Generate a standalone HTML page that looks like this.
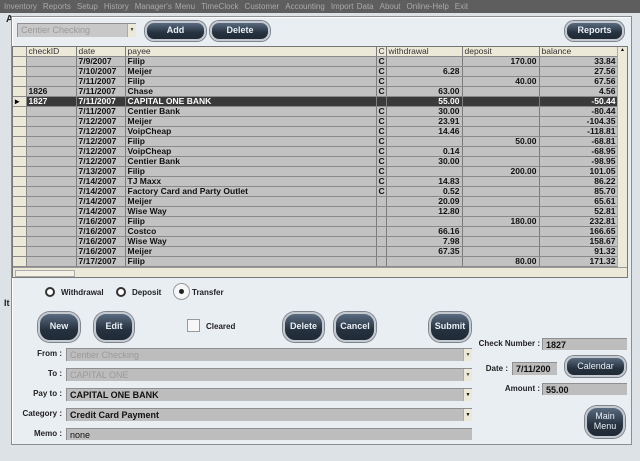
<!DOCTYPE html><html><head><style>
*{margin:0;padding:0;box-sizing:border-box}
body{width:640px;height:461px;overflow:hidden;background:#dde2e7;font-family:"Liberation Sans",sans-serif;position:relative}
.menu{position:absolute;left:0;top:0;width:640px;height:13px;background:#5e5e5e;color:#a9a9a9;font-size:8px;line-height:13px;white-space:nowrap;padding-left:4px;word-spacing:1px}
.menu span{margin-right:6px}
.win{position:absolute;left:11px;top:16px;width:621px;height:429px;background:#e9eef3;border:1px solid #8a8e92;box-shadow:1px 1px 0 #fff inset}
.a{position:absolute}
.btn{position:absolute;border-radius:9px;background:linear-gradient(#5a6b80,#26323f 60%,#1f2a36);color:#e8eef5;font-size:9px;font-weight:bold;text-align:center;border:2px solid #c4c9cf;box-shadow:0 0 0 1px #7d848c;display:flex;align-items:center;justify-content:center;line-height:1.1}
.rb{border-radius:12px}
table{border-collapse:collapse;font-size:8.5px;font-weight:bold;table-layout:fixed}
tr{height:10px}
td{height:10px;border-right:1px solid #7c7c7c;border-bottom:1px solid #8a8a8a;padding:0 2px;line-height:9px;white-space:nowrap;overflow:hidden;background:#c2c2c2;color:#111}
td.r{text-align:right}
td.s{background:#ece9d8;border-right:1px solid #888}
tr.h{height:9px}
tr.h td{background:#ece9d8;font-weight:normal;color:#333;height:9px}
tr.sel td{background:#3a3a3a;color:#fff}
.lbl{position:absolute;font-size:8px;font-weight:bold;color:#222;text-align:right}
.fld{position:absolute;background:#bdbdbd;border-top:1px solid #8f8f8f;border-left:1px solid #8f8f8f;font-size:9px;font-weight:bold;color:#111;padding-left:3px;line-height:12px}
.dd{position:absolute;right:0;top:0;width:9px;height:100%;background:#ece9d8;border-left:1px solid #aaa;font-size:5px;text-align:center;line-height:12px;color:#444}
.radio{position:absolute;width:10px;height:10px;border-radius:50%;border:2px solid #333;background:#fff}
.rl{position:absolute;font-size:8px;font-weight:bold;color:#222}
</style></head><body>
<div class="menu"><span>Inventory</span><span>Reports</span><span>Setup</span><span>History</span><span>Manager's Menu</span><span>TimeClock</span><span>Customer</span><span>Accounting</span><span>Import Data</span><span>About</span><span>Online-Help</span><span>Exit</span></div>
<div class="a" style="left:6px;top:14px;font-size:10px;font-weight:bold;color:#222">A</div>
<div class="a" style="left:4px;top:298px;font-size:9px;font-weight:bold;color:#222">It</div>
<div class="win"></div>
<div class="fld" style="left:17px;top:23px;width:119px;height:14px;background:#c8c8c8;color:#9a9a9a;font-weight:normal">Centier Checking<div class="dd" style="line-height:13px">▼</div></div>
<div class="btn" style="left:145px;top:21px;width:61px;height:20px">Add</div>
<div class="btn" style="left:210px;top:21px;width:60px;height:20px">Delete</div>
<div class="btn" style="left:565px;top:21px;width:59px;height:20px">Reports</div>
<div class="a" style="left:12px;top:46px;width:616px;height:232px;background:#ece9d8;border:1px solid #777;overflow:hidden">
<table style="width:605px">
<colgroup><col style="width:13px"><col style="width:50px"><col style="width:49px"><col style="width:251px"><col style="width:10px"><col style="width:76px"><col style="width:77px"><col style="width:79px"></colgroup>
<tr class="h"><td class="s"></td><td>checkID</td><td>date</td><td>payee</td><td>C</td><td>withdrawal</td><td>deposit</td><td>balance</td></tr>
<tr><td class="s"></td><td></td><td>7/9/2007</td><td>Filip</td><td>C</td><td></td><td class="r">170.00</td><td class="r">33.84</td></tr>
<tr><td class="s"></td><td></td><td>7/10/2007</td><td>Meijer</td><td>C</td><td class="r">6.28</td><td></td><td class="r">27.56</td></tr>
<tr><td class="s"></td><td></td><td>7/11/2007</td><td>Filip</td><td>C</td><td></td><td class="r">40.00</td><td class="r">67.56</td></tr>
<tr><td class="s"></td><td>1826</td><td>7/11/2007</td><td>Chase</td><td>C</td><td class="r">63.00</td><td></td><td class="r">4.56</td></tr>
<tr class="sel"><td class="s" style="background:#ece9d8;color:#000">▸</td><td>1827</td><td>7/11/2007</td><td>CAPITAL ONE BANK</td><td></td><td class="r">55.00</td><td></td><td class="r">-50.44</td></tr>
<tr><td class="s"></td><td></td><td>7/11/2007</td><td>Centier Bank</td><td>C</td><td class="r">30.00</td><td></td><td class="r">-80.44</td></tr>
<tr><td class="s"></td><td></td><td>7/12/2007</td><td>Meijer</td><td>C</td><td class="r">23.91</td><td></td><td class="r">-104.35</td></tr>
<tr><td class="s"></td><td></td><td>7/12/2007</td><td>VoipCheap</td><td>C</td><td class="r">14.46</td><td></td><td class="r">-118.81</td></tr>
<tr><td class="s"></td><td></td><td>7/12/2007</td><td>Filip</td><td>C</td><td></td><td class="r">50.00</td><td class="r">-68.81</td></tr>
<tr><td class="s"></td><td></td><td>7/12/2007</td><td>VoipCheap</td><td>C</td><td class="r">0.14</td><td></td><td class="r">-68.95</td></tr>
<tr><td class="s"></td><td></td><td>7/12/2007</td><td>Centier Bank</td><td>C</td><td class="r">30.00</td><td></td><td class="r">-98.95</td></tr>
<tr><td class="s"></td><td></td><td>7/13/2007</td><td>Filip</td><td>C</td><td></td><td class="r">200.00</td><td class="r">101.05</td></tr>
<tr><td class="s"></td><td></td><td>7/14/2007</td><td>TJ Maxx</td><td>C</td><td class="r">14.83</td><td></td><td class="r">86.22</td></tr>
<tr><td class="s"></td><td></td><td>7/14/2007</td><td>Factory Card and Party Outlet</td><td>C</td><td class="r">0.52</td><td></td><td class="r">85.70</td></tr>
<tr><td class="s"></td><td></td><td>7/14/2007</td><td>Meijer</td><td></td><td class="r">20.09</td><td></td><td class="r">65.61</td></tr>
<tr><td class="s"></td><td></td><td>7/14/2007</td><td>Wise Way</td><td></td><td class="r">12.80</td><td></td><td class="r">52.81</td></tr>
<tr><td class="s"></td><td></td><td>7/16/2007</td><td>Filip</td><td></td><td></td><td class="r">180.00</td><td class="r">232.81</td></tr>
<tr><td class="s"></td><td></td><td>7/16/2007</td><td>Costco</td><td></td><td class="r">66.16</td><td></td><td class="r">166.65</td></tr>
<tr><td class="s"></td><td></td><td>7/16/2007</td><td>Wise Way</td><td></td><td class="r">7.98</td><td></td><td class="r">158.67</td></tr>
<tr><td class="s"></td><td></td><td>7/16/2007</td><td>Meijer</td><td></td><td class="r">67.35</td><td></td><td class="r">91.32</td></tr>
<tr><td class="s"></td><td></td><td>7/17/2007</td><td>Filip</td><td></td><td></td><td class="r">80.00</td><td class="r">171.32</td></tr>
</table>
<div class="a" style="right:0;top:0;width:10px;height:220px;background:#ece9d8;border-left:1px solid #aaa;font-size:5px;text-align:center">▲</div>
<div class="a" style="left:0;top:220px;width:616px;height:11px;background:#ece9d8;border-top:1px solid #999"><div class="a" style="left:2px;top:2px;width:60px;height:7px;border:1px solid #aaa;background:#f3f1e6"></div></div>
</div>
<div class="radio" style="left:45px;top:287px"></div><div class="rl" style="left:61px;top:288px">Withdrawal</div>
<div class="radio" style="left:116px;top:287px"></div><div class="rl" style="left:132px;top:288px">Deposit</div>
<div class="a" style="left:173px;top:283px;width:17px;height:17px;border-radius:50%;border:1px solid #999;background:#f4f6f8"></div>
<div class="a" style="left:179px;top:289px;width:5px;height:5px;border-radius:50%;background:#222"></div><div class="rl" style="left:192px;top:288px">Transfer</div>
<div class="btn rb" style="left:38px;top:312px;width:42px;height:30px">New</div>
<div class="btn rb" style="left:94px;top:312px;width:40px;height:30px">Edit</div>
<div class="a" style="left:187px;top:319px;width:13px;height:13px;border:1px solid #999;background:#f7f7f7"></div>
<div class="rl" style="left:206px;top:322px">Cleared</div>
<div class="btn rb" style="left:283px;top:312px;width:41px;height:30px">Delete</div>
<div class="btn rb" style="left:334px;top:312px;width:42px;height:30px">Cancel</div>
<div class="btn rb" style="left:429px;top:312px;width:42px;height:30px">Submit</div>
<div class="lbl" style="left:20px;top:349px;width:42px">From :</div>
<div class="fld" style="left:66px;top:348px;width:406px;height:13px;color:#9a9a9a;font-weight:normal">Centier Checking<div class="dd">▼</div></div>
<div class="lbl" style="left:20px;top:369px;width:42px">To :</div>
<div class="fld" style="left:66px;top:368px;width:406px;height:13px;color:#9a9a9a;font-weight:normal">CAPITAL ONE<div class="dd">▼</div></div>
<div class="lbl" style="left:10px;top:389px;width:52px">Pay to :</div>
<div class="fld" style="left:66px;top:388px;width:406px;height:13px">CAPITAL ONE BANK<div class="dd" style="color:#000">▼</div></div>
<div class="lbl" style="left:10px;top:409px;width:52px">Category :</div>
<div class="fld" style="left:66px;top:408px;width:406px;height:13px">Credit Card Payment<div class="dd" style="color:#000">▼</div></div>
<div class="lbl" style="left:10px;top:429px;width:52px">Memo :</div>
<div class="fld" style="left:66px;top:428px;width:406px;height:12px;font-weight:normal">none</div>
<div class="lbl" style="left:470px;top:339px;width:70px">Check Number :</div>
<div class="fld" style="left:542px;top:338px;width:85px;height:12px">1827</div>
<div class="lbl" style="left:470px;top:364px;width:38px">Date :</div>
<div class="fld" style="left:512px;top:362px;width:45px;height:13px">7/11/200</div>
<div class="btn" style="left:565px;top:356px;width:61px;height:21px;font-weight:normal">Calendar</div>
<div class="lbl" style="left:490px;top:384px;width:50px">Amount :</div>
<div class="fld" style="left:542px;top:383px;width:85px;height:12px">55.00</div>
<div class="btn rb" style="left:585px;top:406px;width:40px;height:32px;font-weight:normal">Main<br>Menu</div>
</body></html>
